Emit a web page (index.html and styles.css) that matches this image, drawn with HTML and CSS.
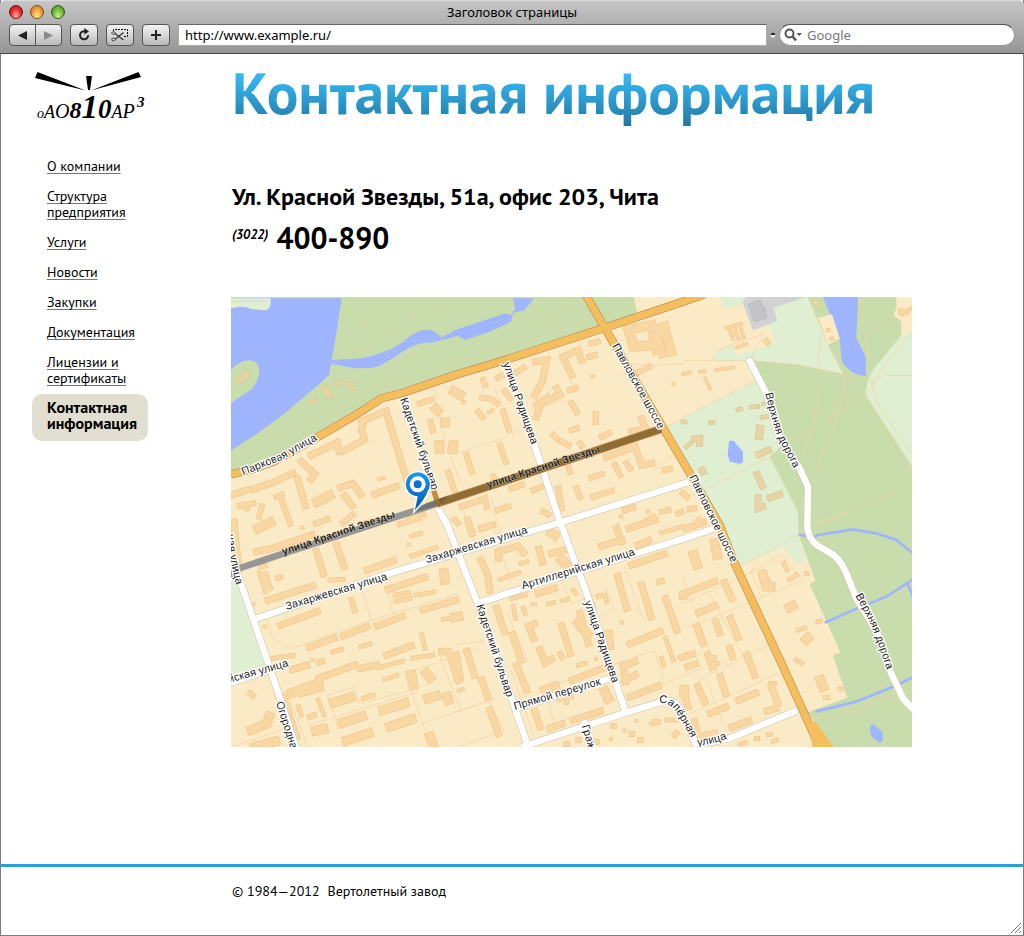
FILE: index.html
```html
<!DOCTYPE html>
<html lang="ru">
<head>
<meta charset="utf-8">
<meta name="viewport" content="width=device-width, initial-scale=1">
<title>Заголовок страницы</title>
<link rel="stylesheet" href="styles.css">
</head>
<body>
<div class="window">
  <header class="chrome">
    <div class="titlebar">
      <div class="lights">
        <button class="light red" aria-label="Закрыть"></button>
        <button class="light amber" aria-label="Свернуть"></button>
        <button class="light green" aria-label="Развернуть"></button>
      </div>
      <div class="title">Заголовок страницы</div>
    </div>
    <div class="toolbar">
      <div class="pair">
        <button class="tool" aria-label="Назад"><svg width="10" height="9" viewBox="0 0 10 9"><path d="M0 4.500L9 0V9Z" fill="#222"/></svg></button>
        <button class="tool" aria-label="Вперёд"><svg width="10" height="9" viewBox="0 0 10 9"><path d="M9 4.500L0 0V9Z" fill="#8b8b8b"/></svg></button>
      </div>
      <button class="tool" aria-label="Обновить"><svg width="14" height="14" viewBox="0 0 14 14"><path d="M8.500 3.400A4.100 4.100 0 1 0 11.200 7.200" fill="none" stroke="#222" stroke-width="2"/><path d="M7.300 0L12 3.600L7.300 6.600Z" fill="#222"/></svg></button>
      <button class="tool" aria-label="Вырезать"><svg width="18" height="14" viewBox="0 0 18 14"><path d="M2.500 3V1.500H16.500V8.500H12" fill="none" stroke="#111" stroke-dasharray="2 1"/><path d="M4 5.500L12.500 12M4 11.500L12.500 4.500" stroke="#333" stroke-width="1.200"/><ellipse cx="2.500" cy="5" rx="1.800" ry="1.300" fill="none" stroke="#444"/><ellipse cx="2.500" cy="11.500" rx="1.800" ry="1.300" fill="none" stroke="#444"/></svg></button>
      <button class="tool" aria-label="Добавить"><svg width="10" height="10" viewBox="0 0 10 10"><path d="M5 0V10M0 5H10" stroke="#222" stroke-width="2"/></svg></button>
      <input class="address" type="text" value="http://www.example.ru/" aria-label="Адрес">
      <svg class="grip" width="6" height="6" viewBox="0 0 6 6"><circle cx="3" cy="3.500" r="2.200" fill="#eee"/><path d="M0.800 3A2.200 2.200 0 0 1 5.200 3Z" fill="#222"/></svg>
      <label class="search">
        <svg width="19" height="14" viewBox="0 0 19 14"><circle cx="5.500" cy="5.500" r="4" fill="none" stroke="#555" stroke-width="2"/><path d="M8.500 8.500L12 12.300" stroke="#555" stroke-width="2.500"/><path d="M12.500 5H18L15.250 8Z" fill="#555"/></svg>
        <input type="search" placeholder="Google" aria-label="Google">
      </label>
    </div>
  </header>

  <div class="page">
    <aside class="side">
      <a class="logo" href="#" aria-label="оАО 810 АР3">
        <svg width="112" height="50" viewBox="34 70 112 50">
          <path d="M37.500 72L85.500 90.500L35 78ZM138.500 72L91 90.500L141 77ZM86 76H92L90 90H88Z"/>
          <text class="mark" x="37" y="118"><tspan class="m14">о</tspan><tspan class="m18">А</tspan><tspan class="m20">О</tspan><tspan class="m24">8</tspan><tspan class="m33">1</tspan><tspan class="m27">0</tspan><tspan class="m18">А</tspan><tspan class="m20">Р</tspan></text>
          <text class="mark m15" x="137" y="107">3</text>
        </svg>
      </a>
      <nav>
        <ul class="menu">
          <li><a href="#">О компании</a></li>
          <li><a href="#">Структура<br>предприятия</a></li>
          <li><a href="#">Услуги</a></li>
          <li><a href="#">Новости</a></li>
          <li><a href="#">Закупки</a></li>
          <li><a href="#">Документация</a></li>
          <li><a href="#">Лицензии и<br>сертификаты</a></li>
          <li class="current">Контактная<br>информация</li>
        </ul>
      </nav>
    </aside>

    <main class="content">
      <h1>Контактная информация</h1>
      <p class="place">Ул. Красной Звезды, 51а, офис 203, Чита</p>
      <p class="phone"><span class="code">(3022)</span><span class="number">400-890</span></p>

      <svg class="map" viewBox="0 0 2043 1350" role="img" aria-label="Карта проезда">
        <defs>
          <g id="blocks">
            <g transform="translate(-3 -6)">
              <path class="w20" d="M398 390L395 380L468 348L533 565M345 465L404 434L395 404M245 480L322 443L328 470M12 598L52 585M72 582L113 568M130 562L188 535M215 500L236 520L255 538L243 552M435 597L498 575M203 552L226 632M332 578L368 566L392 598M345 605L366 632"/>
              <path class="w16" d="M150 602L180 685M140 605L155 600M30 632L70 625M50 640H50M95 635L87 665M570 325L604 314M602 380L608 406M655 532L673 585M340 682L368 660M258 685L292 673M540 672L580 660M410 684L470 672"/>
              <path class="w28" d="M262 620L298 602M672 290L690 300M628 450V462M618 342L622 346M670 450L668 462M645 382H646"/>
              <path class="w10" d="M448 553L462 549"/>
            </g>
            <g transform="translate(672 -6)">
              <path class="w20" d="M242 200L275 195L262 260L240 300M327 185L370 165L380 195M325 190L350 240M245 330L262 318L244 365M262 322L315 300L305 280M608 98L622 180M455 485L540 455L560 510L590 505M560 372L572 400L530 410"/>
              <path class="w28" d="M628 95L648 170M520 105L590 90L605 165M525 115L535 155L595 150"/>
              <path class="w16" d="M85 255L90 270M82 308L110 312L125 325M70 350L82 365M145 350L162 405M345 285L362 280M350 325L365 350M130 248L145 240M185 232L205 218M403 185L420 180M150 290L165 308M295 420L305 430M350 405L365 400M422 358V382M440 425L462 415M35 480L50 530M135 450L152 500M115 545L125 565M170 580L200 570M365 580L375 605M410 548L440 538M415 605L470 588M20 635L90 610L95 635M130 645L160 635M310 580L320 640M265 650L280 658M410 145L428 140M480 510L495 540M515 505L525 520M630 525L645 522M550 232L582 216M0 290L10 302M320 440L340 450M375 445L380 452M340 515L345 530M235 585L260 575M510 645L535 638M578 675L595 665M0 675L8 684M620 650L640 645M670 655L680 650"/>
              <path class="w10" d="M412 244H413M102 352H103M112 346H113M498 665H499M578 650H579M655 266H656M25 322H28"/>
            </g>
            <g transform="translate(1356 -6)">
              <path class="w10" d="M130 98L174 86M140 105L150 132M156 100L166 132M172 95L182 127M162 157L190 147M0 237L20 233M50 230L64 228M98 225L150 218M67 252L80 280M398 20L402 30M434 105H437M445 131H448M658 58L688 38"/>
              <path class="w16" d="M250 138L254 142M0 595L12 605M20 642L34 640M48 675L58 685M655 50H668"/>
            </g>
            <g transform="translate(-3 669)">
              <path class="w20" d="M80 95L110 88M118 88L245 45M260 95L280 160M320 75L342 140M412 150L490 122M115 240L248 198M152 315L262 275M239 382L312 355M340 348L411 320M442 317L516 290M470 405L544 378M580 270L678 240M12 5L18 75L25 125M475 208L584 172M268 475L375 435M390 445L440 435M188 448L230 436M215 520L270 505M635 395L655 395L685 480M160 530L200 650"/>
              <path class="w12" d="M88 158L106 215M107 160L122 205M545 108L618 82M495 225L535 218M498 243L540 235M558 226L612 215M308 396L335 388M392 380L420 372M575 345L585 385M548 415L608 405M445 443L518 424M465 478L500 466M130 415L190 406M545 48L572 40M205 560L213 585M265 540L282 585M300 180L340 178M400 535L430 526M640 298L685 290M92 140L106 138"/>
              <path class="w28" d="M312 548L362 532M338 608L396 590M460 570L524 550M480 620L545 598M350 662L416 640M85 25L120 8M642 160L644 180M545 465L550 495M595 535L618 528M65 630L110 612L118 590M185 520L265 490M590 460L600 472M652 530L655 540M600 650L615 690M258 632L280 627M75 680L135 665"/>
              <path class="w16" d="M145 173L150 172M268 427L276 424M240 590L252 586M62 520L68 526M365 240L374 270M510 12L565 -5"/>
              <path class="w10" d="M70 252H71M103 320H104M247 420H248M536 74H537M215 23H218"/>
            </g>
            <g transform="translate(672 669)">
              <path class="w20" d="M38 0L50 40M130 115L130 95L190 78L205 98M78 120L98 165L105 210M252 88L262 125M290 100L325 90M80 25L112 15M250 220L298 205M375 280L400 370M320 318L345 400M222 320L236 355M222 318L238 312M255 390L270 430L290 418M488 170L515 265M560 195L588 290M632 235L665 330M530 135L628 102M525 372L615 335M125 265L148 335M172 345L198 420M185 437L215 510M36 395L58 465M352 480L445 445M355 600L435 575M285 625L320 612M525 530L610 498M440 78L500 60M485 25L500 65M550 75L580 62M522 25L600 0M105 570L130 640M80 480L98 530M240 575L255 620M505 435L510 485M505 440L540 425M512 480L540 465"/>
              <path class="w12" d="M135 178L192 158M170 235L210 225M198 130L215 125M175 260L182 295M205 265L210 280M280 252L296 248M322 242L338 238M632 355L655 420M675 412L690 405M620 415L625 435M370 436L390 430M430 230L450 225L455 245M405 235L415 260M355 210L362 220M620 38L680 20M335 540V548M635 600H665M590 612L610 608"/>
              <path class="w28" d="M370 310L395 340M0 410L10 470M450 515L460 535M270 510L300 500M320 530L340 525M290 40L298 45M320 120L332 132M460 345L462 375M0 292L10 290M688 510V520"/>
              <path class="w16" d="M316 402L320 410M612 185L620 183M475 618H476M530 642H531M555 660H556M370 660H371M424 665H425M335 672H336M600 605H605M660 645L664 640M680 230H688"/>
              <path class="w10" d="M500 308H501M422 417H423M12 512L24 508M232 253H240M544 603H545M467 657H468M508 632H509"/>
            </g>
            <g transform="translate(1356 669)">
              <path class="w20" d="M0 222L95 185M48 278L95 258M125 188L146 235M142 295L165 352M42 320L60 370M98 305L110 338M192 405L215 465M112 470L128 520M45 500L65 545M82 580L128 562M168 540L218 520M147 622L197 602M265 500L285 550M252 573L278 565M0 412L28 402M15 440L38 432M140 385L148 410M35 605L45 650L95 640M0 515L15 560M10 25L60 8M75 405L88 440M240 160L260 200"/>
              <path class="w28" d="M32 105L42 135M95 70L102 105M240 165L250 200L262 200M412 480L420 500M320 262L328 258M370 358L374 354"/>
              <path class="w12" d="M302 130L312 150M320 178L340 165M345 330L365 324M405 305L412 303M428 533H435M470 507H475M370 160H372M80 412H95M100 430H105M340 420L356 430M262 490H275M172 672L186 668M255 643H262M270 664L280 660M220 656H224"/>
            </g>
          </g>
          <g id="parkbuildings">
            <path class="w20" d="M28 247L45 235M283 277L293 294"/>
            <path class="w12" d="M240 318L252 313M318 260L328 258M350 262L358 260M365 275H366"/>
            <g transform="translate(1356 -6)">
              <path class="w12" d="M205 336L224 334M165 344L172 342M237 367L260 364M226 395L222 428M237 398L233 428M242 327H254M0 381H6M82 382H90M10 455L28 440"/>
              <path class="w20" d="M228 478L256 466M222 538L238 572M225 608L225 640L238 635M262 608L290 598M35 432L50 430V445M58 526L60 530"/>
            </g>
          </g>
          <g id="white">
            <path d="M622 636L647 680L740 919L857 1249L892 1350M902 420L987 674L1067 889L1184 1247M69 967L477 829L1012 669L1390 550M740 919L892 869L1362 724L1451 694M857 1234L1152 1139M872 1350L1184 1247L1292 1214Q1340 1200 1358 1262L1396 1344L1496 1324L1701 1239M20 830L67 967L142 1189L197 1359M0 1157L112 1119M1057 1270L1085 1350"/>
          </g>
          <path id="upper" d="M1556 192L1606 289L1646 424L1706 514L1731 569L1729 684Q1730 725 1760 746L1795 766Q1825 780 1846 829L1876 904L1936 999L1976 1119L2016 1204L2046 1236"/>
          <path id="orange" d="M0 532L60 518L127 494L262 419L377 352L452 304L517 287L672 234L822 189L1117 94L1362 12L1420 -8M1064 -6L1122 94L1297 394L1362 504L1466 684L1511 799L1586 959L1656 1109L1770 1360"/>
          <path id="l1" d="M37 535L150 490L310 400"/>
          <path id="l2" d="M507 307L633 665"/>
          <path id="l3" d="M736 926L860 1300"/>
          <path id="l4" d="M816 200L935 540"/>
          <path id="l5" d="M1060 915L1180 1260"/>
          <path id="l6" d="M1143 147L1330 482"/>
          <path id="l7" d="M1374 540L1530 855"/>
          <path id="l8" d="M1603 289Q1622 370 1640 420L1730 595"/>
          <path id="l9" d="M1873 896Q1915 970 1930 1010L1990 1180"/>
          <path id="l10" d="M167 939L550 823"/>
          <path id="l11" d="M587 799L970 684"/>
          <path id="l12" d="M875 877L1300 747"/>
          <path id="l13" d="M157 774L550 642"/>
          <path id="l14" d="M770 574L1180 441"/>
          <path id="l15" d="M852 1239L1180 1142"/>
          <path id="l16" d="M-6 1158L240 1089"/>
          <path id="l17" d="M135 1217L190 1390"/>
          <path id="l18" d="M-12 712Q-6 790 30 920"/>
          <path id="l19" d="M1052 1287L1090 1410"/>
          <path id="l20" d="M1284 1218C1306 1214 1326 1228 1340 1252L1410 1375"/>
          <path id="l21" d="M1400 1346Q1440 1344 1510 1318"/>
        </defs>

        <rect class="land" width="2043" height="1350"/>
        <path class="park" d="M0 0H1208L1222 62L452 304L262 419L127 494L0 532Z"/>
        <path class="water" d="M0 4H332L319 94L302 189L294 234Q270 260 237 284L167 344Q90 405 0 461Z"/>
        <path class="park" d="M0 219Q25 190 57 190Q88 190 84 235Q75 275 40 290L0 318Z"/>
        <path class="lawn" d="M0 4H118Q124 38 100 40L60 36Q40 24 0 34Z"/>
        <path class="water" d="M302 189L337 187Q440 186 517 134Q560 92 602 99L635 120L672 99L762 69L822 49L842 54L852 34L846 4H910L880 40L854 46L844 56L840 74L772 106L702 129L680 116L647 126L607 136Q550 135 500 175L447 206Q400 222 332 206L300 202Z"/>
        <g transform="translate(1356 -6)">
          <path class="lawn" d="M110 6H688V690H690L345 715L172 813L100 672L-6 505L-66 406L0 368L220 255L200 197H85Q90 170 148 148L122 42Z"/>
          <path class="land" d="M0 6H110L122 42L178 25L210 106L260 92L278 145L160 182L148 148Q95 163 85 197H0Z"/>
          <path class="paved" d="M178 22L210 106L282 78L272 38L370 6H190Z"/>
          <path class="hall" d="M195 28L232 14L240 38L246 36L252 68L215 80Z"/>
          <path class="park" d="M215 197L345 209L480 237L440 160L375 6H640L655 70V120L590 200Q550 240 548 300L688 515V1356H440L375 1252L493 1208L450 1082L472 1072L380 867L397 857L347 720L345 650L260 485L300 450L282 380Z"/>
          <path class="water" d="M420 6H525L520 130L548 185V243Q500 238 476 200L470 130Z"/>
          <path class="land" d="M640 6H690V108L655 125V80L632 60L640 38ZM405 68L447 58L470 130L435 150Z"/>
          <path class="water" d="M138 438L152 437L180 470V500L172 507L140 500L134 480Z"/>
        </g>
        <path class="lawn" d="M1701 750L1658 750L1528 807L1470 690H1701ZM1658 750L1701 714L1728 789L1696 800ZM0 840L40 880L67 967L105 1100L100 1124L0 1157Z"/>
        <g transform="translate(1356 669)">
          <path class="stream" d="M347 43L390 53L405 45L510 28L580 40L640 60L690 100M425 308L530 262L610 230L690 178M674 192L690 230M397 575L520 545L630 500L690 472"/>
          <path class="water" d="M562 615L570 613L598 635L600 660L590 669L570 655Q558 635 562 615Z"/>
        </g>

        <path class="track parktrack" d="M300 204Q330 175 400 160L530 80L580 0M430 154L370 0M640 130L590 75L640 0M0 490L130 420L400 280L560 250L687 200M300 204Q310 240 400 260L450 275L530 180L640 130M672 190L920 120L1060 70M900 0L940 110M840 50L900 90L1000 30M1000 0L960 110M0 13H110"/>
        <g transform="translate(1356 -6)">
          <path class="track" d="M0 197H200L345 209L480 237L548 300L688 520M85 197Q90 165 150 148L240 118L205 190M375 6L440 160L484 237Q485 300 462 370L380 570M415 120L405 190Q415 330 385 400L355 490M30 600L270 480L550 298Q600 210 688 110M550 265L600 241H688M565 250L580 320L688 480M530 6L540 100L558 185M555 110L640 65M0 368L220 255M400 690L688 570M393 1270Q520 1265 590 1210L688 1210M172 813L345 720M375 690L500 650"/>
        </g>
        <path class="track" d="M1122 94L1190 200Q1250 210 1356 200M610 270L640 430L690 560M1297 394L1362 362M110 970L125 1025L180 1055L420 970L680 890M395 880L420 970M465 850L485 950M520 1130L640 1090L740 1050M520 1130L610 1370M620 1060L690 1240M290 1195L370 1170L385 1220L540 1180M290 1195L320 1290M170 1190L230 1350M230 1285L560 1185M570 1280L740 1225M0 1350L180 1290M672 1045L760 1030M830 950L890 1090L840 1120L910 1320M790 690L840 860M860 900L990 840L1020 920L1130 880L1150 940L1080 970M1180 810L1235 965M930 1180L1270 1060L1300 1160L1180 1210M1300 1160L1420 1110M1356 920L1640 790M1370 990L1500 940L1600 900M1356 840L1460 1130M1430 880L1580 1160M1400 1150L1640 1030M1380 1250L1640 1130M1430 1160L1480 1290M1560 820L1650 775L1715 850L1590 900ZM672 470L830 420M1000 160L1030 290M790 270L850 420M860 280L930 330L1000 310M690 620L740 760L810 720L780 600M1170 590L1190 650M1330 470L1270 520M950 1210L970 1280L1120 1230L1110 1170M672 1245L790 1205M740 1150L820 1300L680 1350"/>

        <use class="edge" href="#blocks"/><use class="fill" href="#blocks"/>
        <use class="park-edge" href="#parkbuildings"/><use class="park-fill" href="#parkbuildings"/>

        <path class="side-street" d="M507 294L622 624M817 199L905 430"/>
        <use class="road-edge" href="#white"/><use class="road" href="#white"/>
        <use class="road-edge round" href="#upper"/><use class="road round" href="#upper"/>
        <use class="main-edge" href="#orange"/><use class="main-road" href="#orange"/>
        <path class="main-road flare" d="M1745 1280L1795 1350H1755Z"/>
        <path class="main-edge" d="M617 620L1290 396"/>
        <path class="brown" d="M617 620L1290 396"/>
        <path class="grey" d="M-10 839L30 812L157 770L617 620"/>
        <path class="stub" d="M608 580L622 624"/>

        <g class="labels">
          <text><textPath href="#l1">Парковая улица</textPath></text>
          <text><textPath href="#l2">Кадетский бульвар</textPath></text>
          <text><textPath href="#l3">Кадетский бульвар</textPath></text>
          <text><textPath href="#l4">улица Радищева</textPath></text>
          <text><textPath href="#l5">улица Радищева</textPath></text>
          <text><textPath href="#l6">Павловское шоссе</textPath></text>
          <text><textPath href="#l7">Павловское шоссе</textPath></text>
          <text><textPath href="#l8">Верхняя дорога</textPath></text>
          <text><textPath href="#l9">Верхняя дорога</textPath></text>
          <text><textPath href="#l10">Захаржевская улица</textPath></text>
          <text><textPath href="#l11">Захаржевская улица</textPath></text>
          <text><textPath href="#l12">Артиллерийская улица</textPath></text>
          <text class="strong"><textPath href="#l13">улица Красной Звезды</textPath></text>
          <text class="strong"><textPath href="#l14">улица Красной Звезды</textPath></text>
          <text><textPath href="#l15">Прямой переулок</textPath></text>
          <text><textPath href="#l16">йская улица</textPath></text>
          <text><textPath href="#l17">Огородная</textPath></text>
          <text><textPath href="#l18">ная улица</textPath></text>
          <text><textPath href="#l19">Гражд</textPath></text>
          <text><textPath href="#l20">Сапёрная</textPath></text>
          <text><textPath href="#l21">улица</textPath></text>
        </g>

        <linearGradient id="pin" x1="0" y1="0" x2="0" y2="1"><stop offset="0" stop-color="#1b9af0"/><stop offset="1" stop-color="#0054b4"/></linearGradient>
        <path d="M552 646L585 618L655 594L625 625Z" fill="#444" opacity=".4"/>
        <path class="pin" d="M548 646L558 600A38 38 0 1 1 594 580Q582 612 548 646Z"/>
        <circle cx="560" cy="562" r="24" fill="#fff"/><circle cx="560" cy="562" r="12" fill="#0872d0"/>
      </svg>
    </main>
  </div>

  <footer class="footer">
    <span>© 1984—2012</span><span>Вертолетный завод</span>
    <svg class="resize" width="12" height="12" viewBox="0 0 12 12"><path d="M1 11L11 1M5 11L11 5M9 11L11 9" stroke="#777" fill="none"/></svg>
  </footer>
</div>
</body>
</html>
```
FILE: styles.css
```css
* { box-sizing: border-box; }
body {
  margin: 0;
  background: #fff;
  color: #000;
  font: 14px/16px "PT Sans", "Noto Sans", sans-serif;
}
button, input { font: inherit; }
.window {
  display: flex;
  flex-direction: column;
  min-height: 100vh;
  border: 1px solid #7d7d7d;
  border-top: 0;
}

/* Browser frame */
.chrome {
  height: 54px;
  margin: 0 -1px;
  border-top: 1px solid #dadada;
  border-bottom: 1px solid #444;
  border-radius: 5px 5px 0 0;
  background: linear-gradient(#c6c6c6, #959595);
  font-family: "Lucida Grande", "Noto Sans", sans-serif;
  font-size: 13px;
}
.titlebar {
  display: grid;
  grid-template-columns: 1fr auto 1fr;
  align-items: center;
  height: 21px;
  padding: 0 9px;
}
.lights { display: flex; gap: 7px; }
.light {
  width: 14px;
  height: 14px;
  padding: 0;
  border: 1px solid #555;
  border-radius: 50%;
}
.red { border-color: #6e1414; background: radial-gradient(ellipse at 50% 95%, #ffb0b0, #e8282e 60%, #8e1014); }
.amber { border-color: #84501a; background: radial-gradient(ellipse at 50% 95%, #ffee90, #f0983a 60%, #a55a14); }
.green { border-color: #315f18; background: radial-gradient(ellipse at 50% 95%, #d4f590, #6cb53a 60%, #2e7414); }
.toolbar {
  display: flex;
  align-items: center;
  gap: 8px;
  height: 26px;
  padding: 0 9px;
}
.pair { display: flex; }
.tool {
  display: flex;
  align-items: center;
  justify-content: center;
  width: 28px;
  height: 22px;
  padding: 0;
  border: 1px solid #555;
  border-radius: 4px;
  background: linear-gradient(#f4f4f4, #b9b9b9);
}
.pair .tool { width: 27px; }
.pair .tool:first-child { border-radius: 4px 0 0 4px; }
.pair .tool:last-child { margin-left: -1px; border-radius: 0 4px 4px 0; }
.address {
  flex: 1;
  min-width: 0;
  height: 22px;
  padding: 0 6px;
  border: 1px solid #aaa;
  border-top-color: #666;
  background: #fff;
}
.grip { margin: 0 -5px; }
.search {
  display: flex;
  align-items: center;
  gap: 4px;
  width: 236px;
  height: 22px;
  padding: 0 4px;
  border: 1px solid #999;
  border-top-color: #555;
  border-radius: 11px;
  background: #fff;
}
.search input {
  flex: 1;
  min-width: 0;
  padding: 0;
  border: 0;
  background: none;
}
.search input::placeholder { color: #777; opacity: 1; }

/* Page */
.page { display: flex; flex: 1; }
.side { flex: 0 0 230px; padding: 16px 0 0 31px; }
.logo { display: block; width: 112px; margin-left: 2px; color: #000; }
.logo svg { display: block; overflow: visible; }
.mark { font-family: "Liberation Serif", serif; font-style: italic; }
.m14 { font-size: 14px; }
.m15 { font-size: 15px; font-weight: bold; }
.m18 { font-size: 18px; }
.m20 { font-size: 20px; }
.m24 { font-size: 24px; font-weight: bold; }
.m33 { font-size: 33px; font-weight: bold; }
.m27 { font-size: 27px; font-weight: bold; }
.menu {
  display: flex;
  flex-direction: column;
  gap: 14px;
  margin: 38px 0 0;
  padding: 0;
  list-style: none;
}
.menu li { padding-left: 15px; }
.menu a {
  color: #000;
  text-decoration: underline #777 1px;
  text-underline-offset: 2px;
  text-decoration-skip-ink: none;
}
.menu .current {
  width: 116px;
  margin-top: -6px;
  padding: 5px 0 10px 15px;
  border-radius: 10px;
  background: #e3dfd0;
  font-size: 16px;
  font-weight: bold;
}
.content { flex: 1; min-width: 0; padding: 2px 40px 40px 0; }
h1 {
  margin: 0 0 53px;
  padding-left: 1px;
  font-size: 59px;
  line-height: 72px;
  font-weight: bold;
  background: linear-gradient(#38bfff 20%, #247aa3 95%);
  background-clip: text;
  -webkit-background-clip: text;
  color: transparent;
}
.place { margin: 0; padding-left: 1px; font-size: 24px; line-height: 32px; font-weight: bold; }
.phone { display: flex; align-items: flex-start; gap: 8px; margin: 5px 0 39px; padding-left: 1px; font-weight: bold; }
.code { padding-top: 9px; font-size: 13px; font-style: italic; }
.number { font-size: 30px; line-height: 40px; }
.map { display: block; width: 100%; max-width: 681px; height: auto; }

.footer {
  position: relative;
  display: flex;
  gap: 8px;
  height: 71px;
  padding: 16px 0 0 231px;
  border-top: 3px solid #2d9fd3;
}
.resize { position: absolute; right: 1px; bottom: 1px; }

/* Map */
.land { fill: #faeac5; }
.park { fill: #c9dcab; }
.lawn { fill: #e0efd2; }
.water { fill: #9fb5ff; }
.paved { fill: #d2d2d2; }
.hall { fill: #c4c4c8; stroke: #b5b5bb; stroke-width: 2; }
.stream { fill: none; stroke: #9fb5ff; stroke-width: 8; }
.track { fill: none; stroke: #f4d0a4; stroke-width: 2; }
.parktrack { stroke: #d9d3a5; }
.edge, .fill, .park-edge, .park-fill { fill: none; stroke-linecap: square; }
.edge { --edge: 3px; stroke: #edc289; }
.fill { --edge: 0px; stroke: #f8d7a3; }
.park-edge { --edge: 3px; stroke: #dcc290; }
.park-fill { --edge: 0px; stroke: #e6d4a4; }
.w10 { stroke-width: calc(8px + var(--edge)); }
.w12 { stroke-width: calc(11px + var(--edge)); }
.w16 { stroke-width: calc(15px + var(--edge)); }
.w20 { stroke-width: calc(18px + var(--edge)); }
.w28 { stroke-width: calc(26px + var(--edge)); }
.side-street { fill: none; stroke: #fbf1da; stroke-width: 18; }
.road-edge { fill: none; stroke: #d3ccbb; stroke-width: 23; }
.road { fill: none; stroke: #fff; stroke-width: 19; }
.round { stroke-linecap: round; }
.main-edge { fill: none; stroke: #c48e5c; stroke-width: 25; }
.main-road { fill: none; stroke: #f5be5c; stroke-width: 21; }
.flare { fill: #f5be5c; }
.brown { fill: none; stroke: #8f6d32; stroke-width: 20; }
.grey { fill: none; stroke: #969696; stroke-width: 20; }
.stub { stroke: #c48c38; stroke-width: 16; }
.labels {
  fill: #222;
  stroke: #fff;
  stroke-width: 8;
  stroke-linejoin: round;
  paint-order: stroke;
  font-family: "Liberation Sans", Arial, sans-serif;
  font-size: 33px;
}
.strong { font-weight: bold; font-size: 31px; stroke: #e8dcc0; stroke-width: 2; }
.pin { fill: url(#pin); stroke: #fff; stroke-width: 4; }
```
